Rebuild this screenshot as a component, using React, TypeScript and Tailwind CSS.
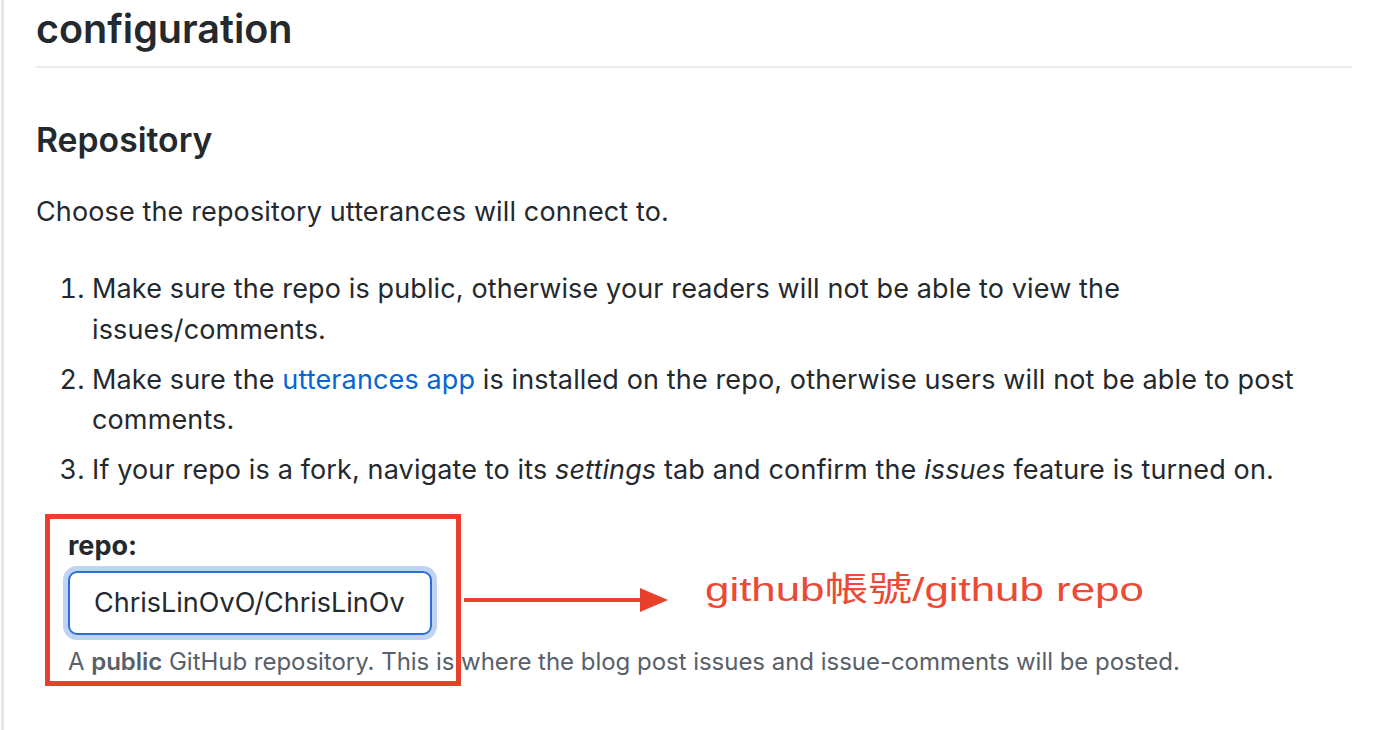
import React from "react";

export default function App() {
  return (
    <div
      className="relative min-h-[730px] w-[1384px] overflow-hidden bg-white pl-px text-[#24292e]"
      style={{ fontFamily: 'Inter, "Noto Sans", "Noto Sans CJK TC", sans-serif' }}
    >
      <div className="min-h-[730px] border-l-[3px] border-[#e5e5ec] pl-[32px]">
        <div className="w-[1316px]">
          <h2 className="border-b-2 border-[#eaeaef] pb-[11px] pt-[4px] text-[39.5px] font-semibold leading-[1.28]">
            configuration
          </h2>
          <h3 className="mt-[51px] text-[33.75px] font-semibold leading-[1.25]">Repository</h3>
          <p className="mt-[31px] text-[27px] leading-[1.5] tracking-[0.13px]">
            Choose the repository utterances will connect to.
          </p>
          <ol className="mt-[37px] list-decimal pl-[56px] text-[27px] leading-[1.5] tracking-[0.13px]">
            <li>
              Make sure the repo is public, otherwise your readers will not be able to view the
              issues/comments.
            </li>
            <li className="mt-[9.5px]">
              Make sure the <a className="text-[#0366d6]">utterances app</a> is installed on the
              repo, otherwise users will not be able to post comments.
            </li>
            <li className="mt-[9.5px]">
              If your repo is a fork, navigate to its <em>settings</em> tab and confirm the{" "}
              <em>issues</em> feature is turned on.
            </li>
          </ol>
          <div className="mt-[35px] pl-[32px]">
            <div className="text-[27px] font-bold leading-[1.5]">repo:</div>
            <div className="mt-[5px] flex h-[64px] w-[364px] items-center rounded-[9px] border-2 border-[#2c6fd4] pl-[24px] text-[27px] shadow-[0_0_0_5px_#bfd3f2]">
              ChrisLinOvO/ChrisLinOv
            </div>
            <p className="mt-[9px] text-[24px] leading-[1.5] tracking-[-0.03px] text-[#586069]">
              A <strong className="font-semibold">public</strong> GitHub repository. This is where the
              blog post issues and issue-comments will be posted.
            </p>
          </div>
        </div>
      </div>

      {/* annotation overlays */}
      <div className="absolute left-[45px] top-[514px] h-[172px] w-[416px] border-[5px] border-[#e8402b]" />
      <svg
        className="absolute left-[463px] top-[587px]"
        width="208"
        height="26"
        viewBox="0 0 208 26"
      >
        <rect x="1" y="11" width="178" height="4" fill="#e8402b" />
        <polygon points="177,1 205,13 177,25" fill="#e8402b" />
      </svg>
      <div
        className="absolute left-[705px] top-[569px] origin-left scale-x-[1.29] whitespace-nowrap text-[34px] leading-[1.2] text-[#ea4a36]"
        style={{ fontFamily: '"Liberation Sans", "Noto Sans CJK TC", sans-serif' }}
      >
        github帳號/github repo
      </div>
    </div>
  );
}
